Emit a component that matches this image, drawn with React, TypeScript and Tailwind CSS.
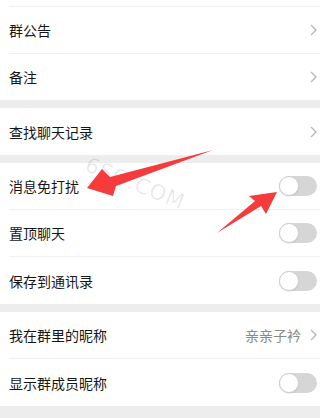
import React from "react";

const font = { fontFamily: '"Noto Sans CJK SC", "Noto Sans", sans-serif' };

function Chevron() {
  return (
    <svg width="7" height="12" viewBox="0 0 7 12" className="shrink-0">
      <path d="M1 1 L6 6 L1 11" fill="none" stroke="#b5b5b5" strokeWidth="1.3" />
    </svg>
  );
}

function Toggle() {
  return (
    <div className="w-[38px] h-[20px] rounded-full bg-[#d6d6d6] relative shrink-0">
      <div className="absolute left-0 top-0 w-[20px] h-[20px] rounded-full bg-white border border-[#cfcfcf] shadow-[0_1px_1px_rgba(0,0,0,0.08)]" />
    </div>
  );
}

function Row({
  label,
  h,
  right,
}: {
  label: string;
  h: string;
  right: React.ReactNode;
}) {
  return (
    <div className={`flex items-center justify-between pl-[9px] pr-[3px] bg-white ${h}`}>
      <span className="text-[14px] text-[#161616] leading-none">{label}</span>
      {right}
    </div>
  );
}

function Divider() {
  return (
    <div className="bg-white pl-[9px]">
      <div className="h-px bg-[#efefef]" />
    </div>
  );
}

function Gap({ h }: { h: string }) {
  return <div className={`bg-[#ededed] ${h}`} />;
}

export default function App() {
  return (
    <div className="relative w-[320px] h-[418px] overflow-hidden bg-[#ededed]" style={font}>
      <div className="h-[6px] bg-white" />
      <Divider />
      <Row label="群公告" h="h-[46px]" right={<Chevron />} />
      <Divider />
      <Row label="备注" h="h-[46px]" right={<Chevron />} />
      <Gap h="h-[8px]" />
      <Row label="查找聊天记录" h="h-[47px]" right={<Chevron />} />
      <Gap h="h-[8px]" />
      <Row label="消息免打扰" h="h-[46px]" right={<Toggle />} />
      <Divider />
      <Row label="置顶聊天" h="h-[46px]" right={<Toggle />} />
      <Divider />
      <Row label="保存到通讯录" h="h-[47px]" right={<Toggle />} />
      <Gap h="h-[8px]" />
      <Row
        label="我在群里的昵称"
        h="h-[46px]"
        right={
          <div className="flex items-center gap-[9px]">
            <span className="text-[14px] text-[#8a8a8a] leading-none">亲亲子衿</span>
            <Chevron />
          </div>
        }
      />
      <Divider />
      <Row label="显示群成员昵称" h="h-[47px]" right={<Toggle />} />

      {/* watermark */}
      <div
        className="absolute left-[135px] top-[184px] -translate-x-1/2 -translate-y-1/2 rotate-[22deg] whitespace-nowrap text-[21px] leading-none text-[#000000]/[0.09] tracking-[1px] select-none"
        style={{ fontFamily: '"DejaVu Sans", sans-serif' }}
      >
        6SO.COM
      </div>

      {/* arrows */}
      <svg className="absolute left-0 top-0 pointer-events-none" width="320" height="418" viewBox="0 0 320 418">
        <polygon
          points="87,188 102,169 110,177 213,150 116,186 113,196"
          fill="#f53b3b"
        />
        <polygon
          points="277,192 266,214 261,206 217,233 255,201 249,196"
          fill="#f53b3b"
        />
      </svg>
    </div>
  );
}
